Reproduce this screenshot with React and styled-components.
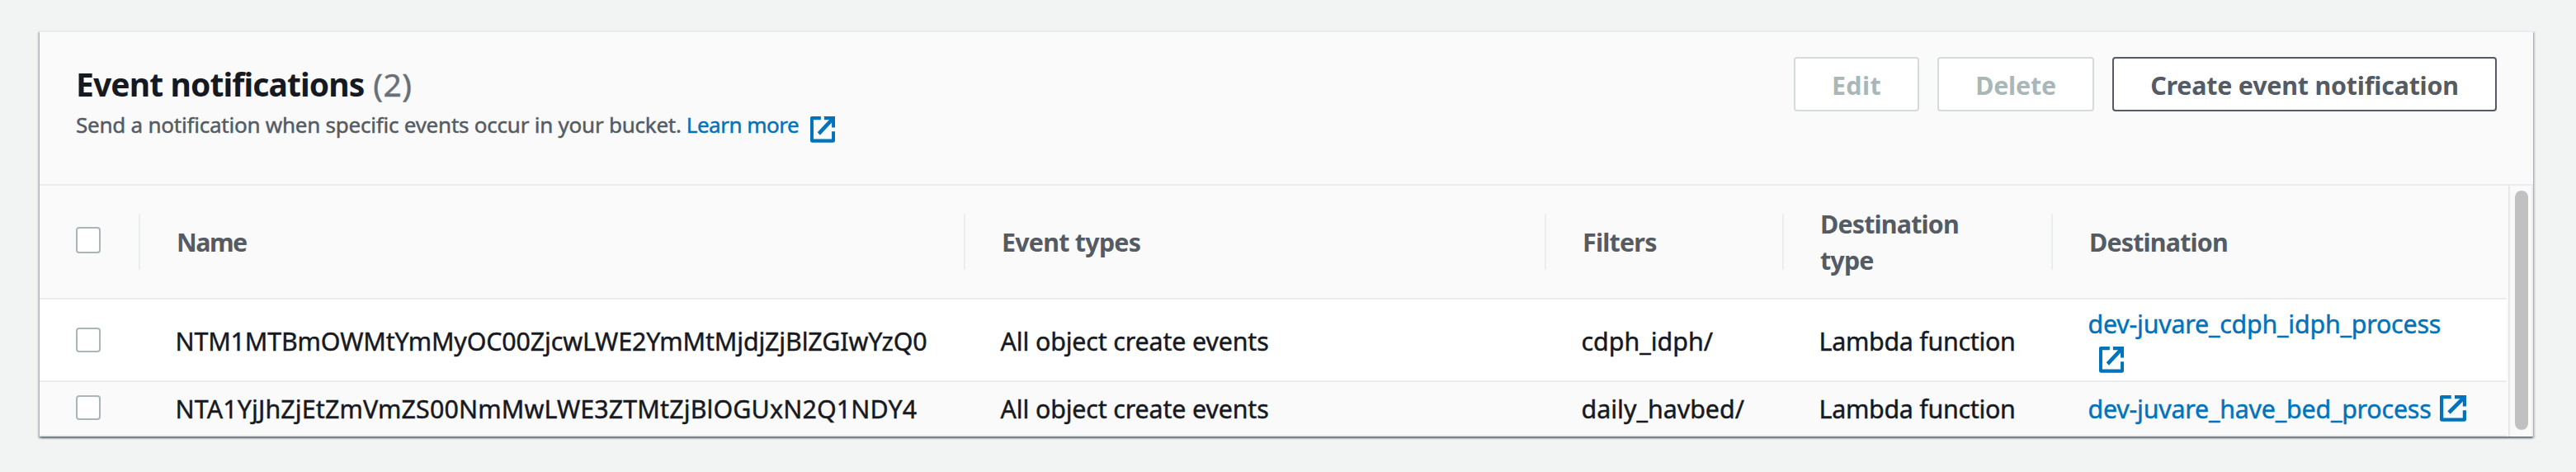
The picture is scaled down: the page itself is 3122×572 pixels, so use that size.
import React from "react";
import styled, { createGlobalStyle } from "styled-components";

const GlobalStyle = createGlobalStyle`
  *, *::before, *::after { box-sizing: border-box; }
  body {
    margin: 0;
    background: #f2f3f3;
    color: #16191f;
    font-family: "Noto Sans", "Open Sans", sans-serif;
  }
`;

const Page = styled.main`
  height: 572px;
  padding: 37px 52px 43px 48px;
  background: #f2f3f3;
`;

const Panel = styled.section`
  height: 492px;
  display: flex;
  flex-direction: column;
  background: #fafafa;
  border-top: 2px solid #eaeded;
  box-shadow:
    0 2px 2px 0 rgba(0, 28, 36, 0.42),
    2px 2px 2px 0 rgba(0, 28, 36, 0.18),
    -2px 2px 2px 0 rgba(0, 28, 36, 0.18);
`;

const PanelHeader = styled.header`
  height: 186px;
  flex: none;
  display: flex;
  justify-content: space-between;
  align-items: flex-start;
  padding: 30px 44px 0;
  border-bottom: 2px solid #eaeded;
`;

const Heading = styled.div`
  padding-top: 11px;
`;

const Text = styled.span`
  letter-spacing: ${(p) => p.$tracking || 0}px;
  white-space: nowrap;
`;

const BodyText = styled(Text)`
  -webkit-text-stroke: 0.45px currentColor;
`;

const Title = styled.h2`
  margin: 0 0 9px;
  display: flex;
  gap: 11px;
  font-size: 39px;
  line-height: 44px;
  font-weight: 700;
`;

const Count = styled(BodyText)`
  color: #687078;
  font-weight: 400;
`;

const Description = styled.div`
  display: flex;
  align-items: flex-start;
  font-size: 26px;
  line-height: 36px;
  color: #545b64;
`;

const Link = styled.a`
  color: #0073bb;
  text-decoration: none;
  display: flex;
  flex-wrap: wrap;
  align-items: center;
`;

const InfoLink = styled(Link)`
  align-items: flex-start;
  margin-left: 6px;
  gap: 14px;

  svg { margin-top: 8px; }
`;

const WrappedIcon = styled.span`
  flex-basis: 100%;
  height: 42px;
  display: flex;
  align-items: center;
`;

const DestinationLink = styled(Link)`
  svg { margin-left: ${(p) => (p.$wrapped ? 13 : 11)}px; }
  > svg { margin-bottom: 2px; }
`;

const Actions = styled.div`
  display: flex;
  gap: 22px;
`;

const Button = styled.button`
  width: ${(p) => p.$width}px;
  height: 66px;
  padding: 4px 0 0;
  border: 2px solid #545b64;
  border-radius: 4px;
  background: #fff;
  color: #545b64;
  font: 700 30.4px/44px "Noto Sans", "Open Sans", sans-serif;

  &:disabled {
    color: #aab7b8;
    border-color: #d5dbdb;
  }
`;

const TableArea = styled.div`
  flex: 1;
  display: flex;
`;

const Table = styled.div`
  width: 2990px;
  font-size: 30.4px;
  line-height: 44px;
`;

const Row = styled.div`
  display: grid;
  grid-template-columns: 122px 1000px 704px 288px 326px 550px;
  align-items: center;
  height: ${(p) => p.$height}px;
  padding-top: ${(p) => p.$shift || 0}px;
  background: ${(p) => (p.$striped ? "#fafafa" : "#fff")};
  border-bottom: 2px solid #eaeded;
`;

const Cell = styled.div`
  padding: 2px 0 0 42.5px;
`;

const HeaderCell = styled.div`
  height: 68px;
  display: flex;
  align-items: center;
  padding-left: 44px;
  border-right: ${(p) => (p.$last ? 0 : 2)}px solid #eaeded;
  color: #545b64;
  font-weight: 700;
`;

const HeaderText = styled(Text)`
  margin-top: 2px;
`;

const Checkbox = styled.span.attrs({ role: "checkbox", "aria-checked": false })`
  display: block;
  width: 30px;
  height: ${(p) => (p.$head ? 32 : 30)}px;
  margin-bottom: ${(p) => (p.$head ? 4 : 2)}px;
  border: 2px solid #aab7b8;
  border-radius: 4px;
  background: #fff;
`;

const CheckCell = styled.div`
  padding-left: 44px;
`;

const ScrollTrack = styled.div`
  width: 30px;
  margin-left: 2px;
  padding: 6px 4px 8px 6px;
  border-left: 2px solid #e8e8e8;
  border-right: 2px solid #ededed;
  background: #fafafa;
`;

const ScrollThumb = styled.div`
  width: 16px;
  height: 290px;
  border-radius: 8px;
  background: #c1c1c1;
`;

const IconSvg = styled.svg`
  display: block;
  flex: none;
`;

function ExternalIcon({ width = 30 }) {
  return (
    <IconSvg width={width} height="32" viewBox="0 0 32 32" preserveAspectRatio="none" fill="none" stroke="#0073bb" strokeWidth="4.2">
      <path d="M13.7 2.1H2.1V29.6H29.9V18.2" strokeLinejoin="round" />
      <path d="M18 2.1H29.9V13.6" />
      <path d="M11 21L28.5 3.5" strokeWidth="4.6" />
    </IconSvg>
  );
}

const columns = [
  { lines: ["Name"], tracking: -1.5 },
  { lines: ["Event types"], tracking: -0.75 },
  { lines: ["Filters"], tracking: -0.77 },
  { lines: ["Destination", "type"], tracking: -0.82 },
  { lines: ["Destination"], tracking: -0.82 },
];

const notifications = [
  {
    name: "NTM1MTBmOWMtYmMyOC00ZjcwLWE2YmMtMjdjZjBlZGIwYzQ0",
    nameTracking: -0.15,
    filter: "cdph_idph/",
    destination: "dev-juvare_cdph_idph_process",
    wrapped: true,
    height: 100,
    shift: 2,
  },
  {
    name: "NTA1YjJhZjEtZmVmZS00NmMwLWE3ZTMtZjBlOGUxN2Q1NDY4",
    nameTracking: 0.13,
    filter: "daily_havbed/",
    destination: "dev-juvare_have_bed_process",
    wrapped: false,
    height: 66,
    shift: 0,
  },
];

export default function App() {
  return (
    <Page>
      <GlobalStyle />
      <Panel>
        <PanelHeader>
          <Heading>
            <Title>
              <Text $tracking={-0.89}>Event notifications</Text>
              <Count $tracking={0.4}>(2)</Count>
            </Title>
            <Description>
              <BodyText $tracking={-0.23}>Send a notification when specific events occur in your bucket.</BodyText>
              <InfoLink>
                <BodyText $tracking={-0.5}>Learn more</BodyText>
                <ExternalIcon />
              </InfoLink>
            </Description>
          </Heading>
          <Actions>
            <Button $width={152} disabled><Text $tracking={0.4}>Edit</Text></Button>
            <Button $width={190} disabled><Text $tracking={-0.2}>Delete</Text></Button>
            <Button $width={466}><Text $tracking={-0.2}>Create event notification</Text></Button>
          </Actions>
        </PanelHeader>
        <TableArea>
          <Table>
            <Row $height={138} $striped>
              <HeaderCell><Checkbox $head /></HeaderCell>
              {columns.map((c, i) => (
                <HeaderCell key={i} $last={i === columns.length - 1}>
                  <HeaderText $tracking={c.tracking}>
                    {c.lines.map((l, j) => (
                      <React.Fragment key={l}>{j > 0 && <br />}{l}</React.Fragment>
                    ))}
                  </HeaderText>
                </HeaderCell>
              ))}
            </Row>
            {notifications.map((n, i) => (
              <Row key={n.name} $height={n.height} $shift={n.shift} $striped={i % 2 === 1}>
                <CheckCell><Checkbox /></CheckCell>
                <Cell><BodyText $tracking={n.nameTracking}>{n.name}</BodyText></Cell>
                <Cell><BodyText $tracking={-0.15}>All object create events</BodyText></Cell>
                <Cell><BodyText>{n.filter}</BodyText></Cell>
                <Cell><BodyText $tracking={-0.28}>Lambda function</BodyText></Cell>
                <Cell>
                  <DestinationLink $wrapped={n.wrapped}>
                    <BodyText $tracking={-0.22}>{n.destination}</BodyText>
                    {n.wrapped ? <WrappedIcon><ExternalIcon /></WrappedIcon> : <ExternalIcon width={32} />}
                  </DestinationLink>
                </Cell>
              </Row>
            ))}
          </Table>
          <ScrollTrack><ScrollThumb /></ScrollTrack>
        </TableArea>
      </Panel>
    </Page>
  );
}
